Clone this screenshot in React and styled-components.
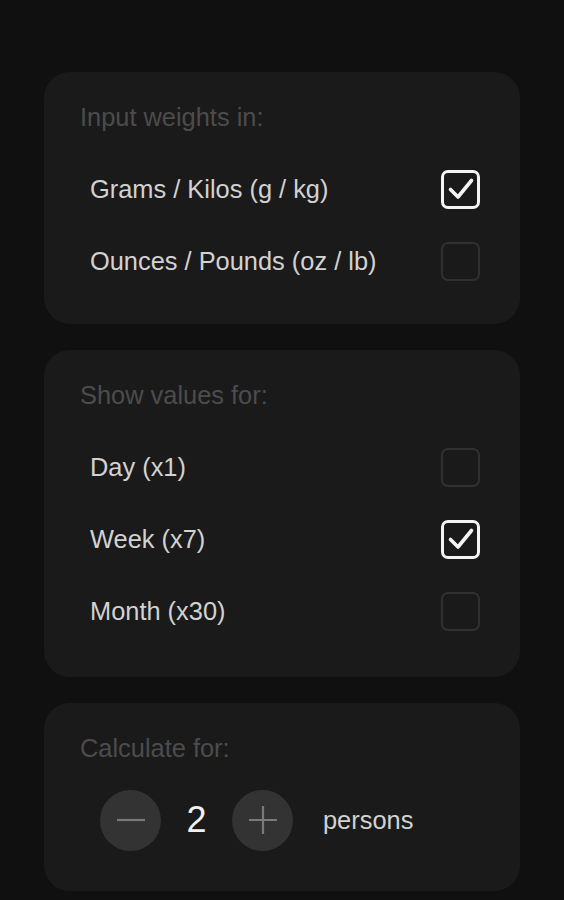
import React, { useState } from "react";
import styled, { createGlobalStyle } from "styled-components";

const GlobalStyle = createGlobalStyle`
    html, body {
        margin: 0;
        background: #101010;
    }
    body {
        font-family: "Liberation Sans", Arial, sans-serif;
    }
`;

const Page = styled.div`
    min-height: 900px;
    box-sizing: border-box;
    padding: 72px 44px 0 44px;
    display: flex;
    flex-direction: column;
    gap: 26px;
`;

const Card = styled.section`
    background: #1a1a1a;
    border-radius: 26px;
    padding: 31px 40px ${props => props.$tail || 27}px 36px;
`;

const Title = styled.div`
    color: #4c4c4c;
    font-size: 25.4px;
    line-height: 29px;
    margin-bottom: 21px;
`;

const Row = styled.div`
    height: 72px;
    display: flex;
    align-items: center;
    justify-content: space-between;
    padding-left: 10px;
    cursor: pointer;
`;

const Label = styled.span`
    color: #d2d2d2;
    font-size: 25.4px;
`;

const Box = styled.span`
    width: 39px;
    height: 39px;
    box-sizing: border-box;
    border-radius: 7px;
    border: ${props => (props.$on ? "3px solid #f4f4f4" : "2px solid #303030")};
    display: flex;
    align-items: center;
    justify-content: center;
`;

const Stepper = styled.div`
    height: 72px;
    display: flex;
    align-items: center;
    padding-left: 20px;
`;

const Round = styled.button`
    width: 61px;
    height: 61px;
    border-radius: 50%;
    border: none;
    background: #333333;
    display: flex;
    align-items: center;
    justify-content: center;
    padding: 0;
    cursor: pointer;
`;

const Count = styled.span`
    width: 71px;
    text-align: center;
    color: #f0f0f0;
    font-size: 36px;
`;

const Unit = styled.span`
    margin-left: 30px;
    color: #d2d2d2;
    font-size: 25.4px;
`;

const Check = () => (
    <svg width="30" height="30" viewBox="0 0 30 30">
        <path
            d="M4.5 15.5 L12 23 L25.5 6.5"
            fill="none"
            stroke="#f4f4f4"
            strokeWidth="3.6"
            strokeLinecap="round"
            strokeLinejoin="round"
        />
    </svg>
);

const Option = ({ label, on, onPick }) => (
    <Row onClick={onPick}>
        <Label>{label}</Label>
        <Box $on={on}>{on ? <Check /> : null}</Box>
    </Row>
);

const units = ["Grams / Kilos (g / kg)", "Ounces / Pounds (oz / lb)"];
const periods = ["Day (x1)", "Week (x7)", "Month (x30)"];

const App = () => {
    const [unit, setUnit] = useState(0);
    const [period, setPeriod] = useState(1);
    const [persons, setPersons] = useState(2);

    return (
        <Page>
            <GlobalStyle />
            <Card>
                <Title>Input weights in:</Title>
                {units.map((u, i) => (
                    <Option key={u} label={u} on={unit === i} onPick={() => setUnit(i)} />
                ))}
            </Card>
            <Card $tail={30}>
                <Title>Show values for:</Title>
                {periods.map((p, i) => (
                    <Option key={p} label={p} on={period === i} onPick={() => setPeriod(i)} />
                ))}
            </Card>
            <Card $tail={35}>
                <Title>Calculate for:</Title>
                <Stepper>
                    <Round onClick={() => setPersons(Math.max(1, persons - 1))}>
                        <svg width="30" height="30" viewBox="0 0 30 30">
                            <path d="M1 15 H29" stroke="#7a7a7a" strokeWidth="2.2" />
                        </svg>
                    </Round>
                    <Count>{persons}</Count>
                    <Round onClick={() => setPersons(persons + 1)}>
                        <svg width="30" height="30" viewBox="0 0 30 30">
                            <path d="M1 15 H29 M15 1 V29" stroke="#7a7a7a" strokeWidth="2.2" />
                        </svg>
                    </Round>
                    <Unit>persons</Unit>
                </Stepper>
            </Card>
        </Page>
    );
};

export default App;
